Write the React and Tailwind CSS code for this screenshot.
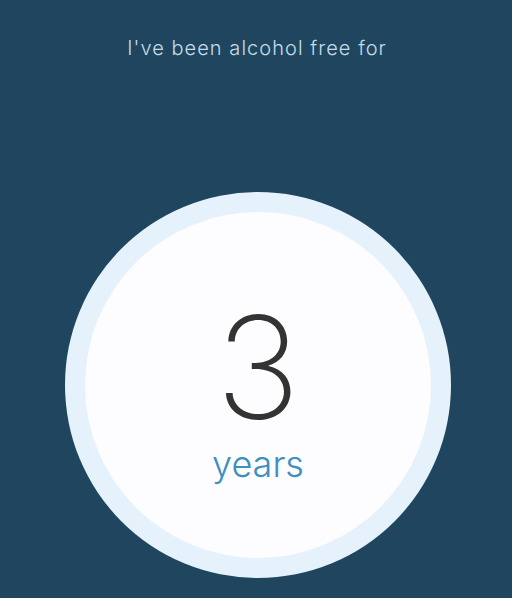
import React from 'react';

export default function App() {
  return (
    <div
      className="w-[512px] h-[598px] bg-[#1f465e] flex flex-col items-center overflow-hidden"
      style={{ fontFamily: 'Inter, "Noto Sans", sans-serif' }}
    >
      <p className="mt-[35px] ml-[2px] text-[20px] leading-[26px] font-light text-[#c6dceb] tracking-[1.05px]">
        I've been alcohol free for
      </p>
      <div className="mt-[131px] ml-[4px] w-[386px] h-[386px] rounded-full bg-[#e5f2fc] flex items-center justify-center">
        <div className="w-[346px] h-[346px] rounded-full bg-[#fdfcff] flex flex-col items-center">
          <span className="mt-[100px] text-[142px] leading-[110px] font-extralight text-[#333333]">3</span>
          <span className="mt-[22px] text-[36px] leading-[40px] font-light text-[#3b8fc2]">years</span>
        </div>
      </div>
    </div>
  );
}
